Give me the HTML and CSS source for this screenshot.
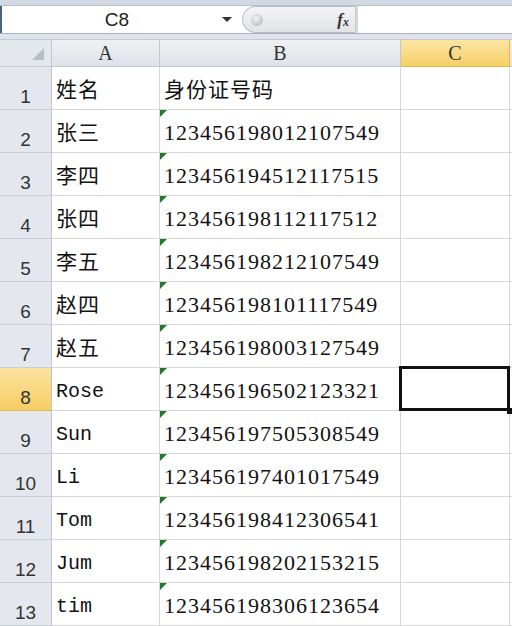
FILE: index.html
```
<!DOCTYPE html>
<html lang="zh-CN">
<head>
    <meta charset="UTF-8">
    <title>身份证号码</title>
    <link rel="stylesheet" href="styles.css">
</head>
<body>
    <div class="window">
        <div class="topbar"></div>
        <div class="formula">
            <div class="namebox">
                <span class="ref">C8</span>
                <span class="arrow"></span>
            </div>
            <div class="pill">
                <span class="knob"></span>
                <span class="fx">f<sub>x</sub></span>
            </div>
            <div class="input"></div>
        </div>
        <div class="gap"></div>

        <div class="sheet">
            <div class="hd corner"><span class="tri"></span></div>
            <div class="hd col">A</div>
            <div class="hd col">B</div>
            <div class="hd col on">C</div>
            <div class="hd end"></div>

            <div class="rh">1</div><div class="c cjk">姓名</div><div class="c cjk">身份证号码</div><div class="c"></div><div class="e"></div>
            <div class="rh">2</div><div class="c cjk">张三</div><div class="c num">123456198012107549</div><div class="c"></div><div class="e"></div>
            <div class="rh">3</div><div class="c cjk">李四</div><div class="c num">123456194512117515</div><div class="c"></div><div class="e"></div>
            <div class="rh">4</div><div class="c cjk">张四</div><div class="c num">123456198112117512</div><div class="c"></div><div class="e"></div>
            <div class="rh">5</div><div class="c cjk">李五</div><div class="c num">123456198212107549</div><div class="c"></div><div class="e"></div>
            <div class="rh">6</div><div class="c cjk">赵四</div><div class="c num">123456198101117549</div><div class="c"></div><div class="e"></div>
            <div class="rh">7</div><div class="c cjk">赵五</div><div class="c num">123456198003127549</div><div class="c"></div><div class="e"></div>
            <div class="rh on">8</div><div class="c">Rose</div><div class="c num">123456196502123321</div><div class="c sel"></div><div class="e"></div>
            <div class="rh">9</div><div class="c">Sun</div><div class="c num">123456197505308549</div><div class="c"></div><div class="e"></div>
            <div class="rh">10</div><div class="c">Li</div><div class="c num">123456197401017549</div><div class="c"></div><div class="e"></div>
            <div class="rh">11</div><div class="c">Tom</div><div class="c num">123456198412306541</div><div class="c"></div><div class="e"></div>
            <div class="rh">12</div><div class="c">Jum</div><div class="c num">123456198202153215</div><div class="c"></div><div class="e"></div>
            <div class="rh">13</div><div class="c">tim</div><div class="c num">123456198306123654</div><div class="c"></div><div class="e"></div>
        </div>
    </div>
</body>
</html>
```

FILE: styles.css
```
body {
    margin: 0;
    padding: 0;
    background-color: #ffffff;
}

.window {
    width: 512px;
    height: 626px;
    overflow: hidden;
    background-color: #dfe3e9;
}

/* barra superior */
.topbar {
    height: 5px;
    background-color: #d3d9e2;
    border-bottom: 1px solid #b9c1cc;
}

.formula {
    display: flex;
    height: 27px;
    border-bottom: 1px solid #a9b1bc;
    background-color: #ffffff;
}

.namebox {
    width: 242px;
    display: flex;
    align-items: center;
    border-left: 2px solid #4d6185;
    box-sizing: border-box;
}

.ref {
    flex: 1;
    text-align: center;
    padding-left: 10px;
    font-family: "Liberation Sans", Arial, sans-serif;
    font-size: 19px;
    color: #222;
}

.arrow {
    width: 0;
    height: 0;
    margin-right: 10px;
    border-left: 5px solid transparent;
    border-right: 5px solid transparent;
    border-top: 5px solid #333;
}

.pill {
    width: 114px;
    display: flex;
    align-items: center;
    justify-content: space-between;
    background: linear-gradient(#f3f4f6, #e1e3e7);
    border-radius: 14px 0 0 14px;
    border: 1px solid #b7bcc4;
    border-right-color: #c9ced5;
    box-sizing: border-box;
}

.knob {
    width: 12px;
    height: 12px;
    margin-left: 8px;
    border-radius: 50%;
    background: radial-gradient(circle at 40% 35%, #f4f4f4, #a9aeb6);
}

.fx {
    font-family: "Liberation Serif", "Times New Roman", serif;
    font-style: italic;
    font-weight: bold;
    font-size: 17px;
    color: #333;
    margin-right: 6px;
}

.fx sub {
    font-size: 12px;
    vertical-align: -1px;
}

.input {
    flex: 1;
    border-left: 2px solid #d3d7dd;
}

.gap {
    height: 5px;
    background-color: #dfe3e9;
    border-bottom: 1px solid #c3c9d1;
}

/* planilha */
.sheet {
    display: grid;
    grid-template-columns: 52px 108px 241px 109px 2px;
    grid-template-rows: 27px repeat(13, 43px);
    background-color: #ffffff;
}

.hd {
    background: linear-gradient(#eef0f3, #dfe3e9);
    border-right: 1px solid #c2c8d0;
    border-bottom: 1px solid #c2c8d0;
    font-family: "Liberation Serif", serif;
    font-size: 20px;
    color: #333;
    display: flex;
    align-items: center;
    justify-content: center;
}

.hd.on {
    background: linear-gradient(#fbe6a3, #f6cf68);
    border-color: #e9b84a;
    color: #333;
}

.corner {
    position: relative;
    background: #e4e8ed;
}

.tri {
    position: absolute;
    right: 7px;
    bottom: 6px;
    width: 0;
    height: 0;
    border-left: 12px solid transparent;
    border-bottom: 12px solid #b9bec6;
}

.end {
    border-right: none;
}

.rh {
    background-color: #e4e8ee;
    border-right: 1px solid #bfc5cd;
    border-bottom: 1px solid #c9ced6;
    font-family: "Liberation Sans", Arial, sans-serif;
    font-size: 19px;
    color: #333;
    display: flex;
    align-items: flex-end;
    justify-content: center;
    padding-bottom: 1px;
}

.rh.on {
    background: linear-gradient(#fbe3a0, #f6cd63);
    border-bottom-color: #e6b54a;
}

.c {
    position: relative;
    border-right: 1px solid #d6d6d6;
    border-bottom: 1px solid #d6d6d6;
    font-family: "Liberation Mono", "Noto Sans CJK SC", monospace;
    font-size: 20px;
    color: #111;
    display: flex;
    align-items: center;
    padding: 4px 0 0 4px;
    white-space: nowrap;
}

.c.cjk {
    font-family: "Noto Sans CJK SC", sans-serif;
    font-size: 21px;
    letter-spacing: 1px;
    padding-top: 0;
}

.c.num {
    font-family: "Liberation Serif", serif;
    font-size: 22px;
    letter-spacing: 1px;
}

/* triangulo verde (numero como texto) */
.num::before {
    content: "";
    position: absolute;
    top: 0;
    left: 0;
    border-top: 7px solid #207a2a;
    border-right: 7px solid transparent;
}

.e {
    border-bottom: 1px solid #d6d6d6;
}

.sel::after {
    content: "";
    position: absolute;
    top: -2px;
    left: -2px;
    right: -1px;
    bottom: -1px;
    border: 3px solid #111;
}

.sel::before {
    content: "";
    position: absolute;
    right: -4px;
    bottom: -4px;
    width: 6px;
    height: 6px;
    background-color: #111;
    z-index: 1;
}
```
